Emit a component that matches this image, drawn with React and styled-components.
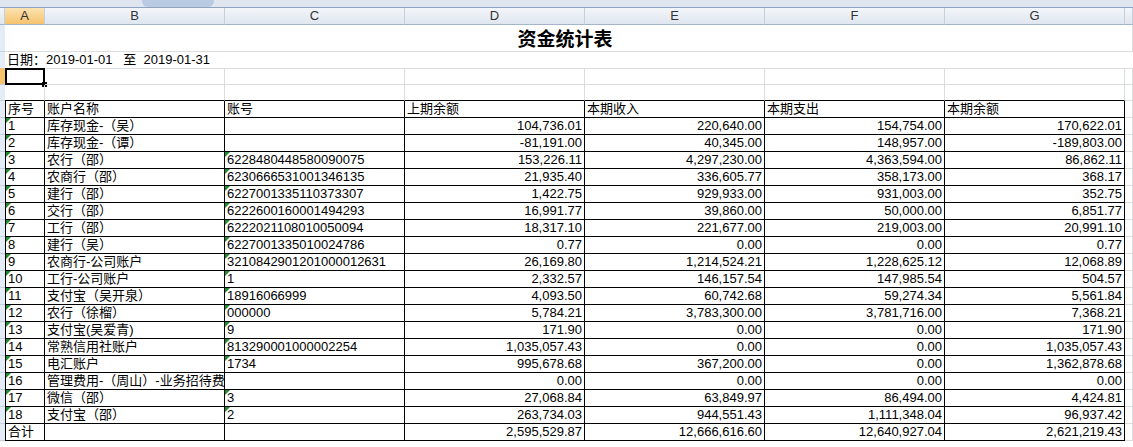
import React from 'react';
import styled, { createGlobalStyle } from 'styled-components';

const Global = createGlobalStyle`
  body { margin: 0; background: #fff; font-family: "Liberation Sans", "Noto Sans CJK SC", sans-serif; font-size: 13px; color: #000; }
`;

const COLS = '5px 40px 180px 180px 180px 180px 180px 180px 1fr';

const Sheet = styled.div`
  width: 1133px;
  height: 447px;
  overflow: hidden;
`;

const TopStrip = styled.div`
  height: 8px;
  background: #dfe6ef;
  border-bottom: 1px solid #8ea3bd;
  display: flex;
  box-sizing: border-box;
`;

const Tab = styled.div`
  margin-left: 142px;
  width: 72px;
  background: #b9cbe2;
  border-radius: 0 0 6px 6px;
`;

const Row = styled.div`
  display: grid;
  grid-template-columns: ${COLS};
  height: ${p => p.$h}px;
`;

const ColHead = styled.div`
  background: ${p => (p.$active ? 'linear-gradient(#fbe3b1,#f6c36c)' : 'linear-gradient(#f3f6fa,#dfe6ef)')};
  border-right: 1px solid #c5d0dd;
  border-bottom: 1px solid #a5b5c9;
  text-align: center;
  font-size: 13px;
  line-height: 16px;
  color: #333;
`;

const Stub = styled.div`
  background: ${p => (p.$active ? '#f6c36c' : '#e4ecf7')};
  border-bottom: 1px solid #c5d0dd;
`;

const Cell = styled.div`
  position: relative;
  box-sizing: border-box;
  border-right: 1px solid ${p => (p.$b ? '#000' : '#dadcdd')};
  border-bottom: 1px solid ${p => (p.$b ? '#000' : '#dadcdd')};
  border-left: ${p => (p.$first ? '1px solid #000' : 'none')};
  text-align: ${p => (p.$num ? 'right' : 'left')};
  padding: 0 2px;
  white-space: nowrap;
  overflow: hidden;
  line-height: 16px;
  font-size: 13px;
`;

const Title = styled.div`
  grid-column: 2 / 9;
  text-align: center;
  font-family: "Noto Sans CJK SC", sans-serif;
  font-weight: 700;
  font-size: 19px;
  line-height: 26px;
  border-bottom: 1px solid #dadcdd;
`;

const Span = styled.div`
  grid-column: 2 / 10;
  line-height: 16px;
  padding-left: 2px;
  border-bottom: 1px solid #dadcdd;
`;

const Selected = styled.div`
  box-sizing: border-box;
  border: 2px solid #000;
  position: relative;
  &::after {
    content: '';
    position: absolute;
    right: -4px;
    bottom: -4px;
    width: 5px;
    height: 5px;
    background: #000;
  }
`;

const Tri = styled.span`
  position: absolute;
  left: 0;
  top: 0;
  border-top: 5px solid #1e8c2e;
  border-right: 5px solid transparent;
`;

const data = [
  ['1', '库存现金-（吴）', '', '104,736.01', '220,640.00', '154,754.00', '170,622.01'],
  ['2', '库存现金-（谭）', '', '-81,191.00', '40,345.00', '148,957.00', '-189,803.00'],
  ['3', '农行（邵）', '6228480448580090075', '153,226.11', '4,297,230.00', '4,363,594.00', '86,862.11'],
  ['4', '农商行（邵）', '6230666531001346135', '21,935.40', '336,605.77', '358,173.00', '368.17'],
  ['5', '建行（邵）', '6227001335110373307', '1,422.75', '929,933.00', '931,003.00', '352.75'],
  ['6', '交行（邵）', '6222600160001494293', '16,991.77', '39,860.00', '50,000.00', '6,851.77'],
  ['7', '工行（邵）', '6222021108010050094', '18,317.10', '221,677.00', '219,003.00', '20,991.10'],
  ['8', '建行（吴）', '6227001335010024786', '0.77', '0.00', '0.00', '0.77'],
  ['9', '农商行-公司账户', '3210842901201000012631', '26,169.80', '1,214,524.21', '1,228,625.12', '12,068.89'],
  ['10', '工行-公司账户', '1', '2,332.57', '146,157.54', '147,985.54', '504.57'],
  ['11', '支付宝（吴开泉）', '18916066999', '4,093.50', '60,742.68', '59,274.34', '5,561.84'],
  ['12', '农行（徐榴）', '000000', '5,784.21', '3,783,300.00', '3,781,716.00', '7,368.21'],
  ['13', '支付宝(吴爱青)', '9', '171.90', '0.00', '0.00', '171.90'],
  ['14', '常熟信用社账户', '813290001000002254', '1,035,057.43', '0.00', '0.00', '1,035,057.43'],
  ['15', '电汇账户', '1734', '995,678.68', '367,200.00', '0.00', '1,362,878.68'],
  ['16', '管理费用-（周山）-业务招待费', '', '0.00', '0.00', '0.00', '0.00'],
  ['17', '微信（邵）', '3', '27,068.84', '63,849.97', '86,494.00', '4,424.81'],
  ['18', '支付宝（邵）', '2', '263,734.03', '944,551.43', '1,111,348.04', '96,937.42'],
];

const heads = ['序号', '账户名称', '账号', '上期余额', '本期收入', '本期支出', '本期余额'];

function Line({ cells, tri, head }) {
  return (
    <Row $h={17}>
      <Stub />
      {cells.map((c, i) => (
        <Cell key={i} $b $first={i === 0} $num={!head && i >= 3}>
          {tri && (i === 0 || (i === 2 && c)) && <Tri />}
          {c}
        </Cell>
      ))}
      <Cell />
    </Row>
  );
}

export default function App() {
  return (
    <Sheet>
      <Global />
      <TopStrip><Tab /></TopStrip>
      <Row $h={17}>
        <ColHead />
        {['A', 'B', 'C', 'D', 'E', 'F', 'G', ''].map((l, i) => (
          <ColHead key={i} $active={i === 0}>{l}</ColHead>
        ))}
      </Row>
      <Row $h={27}><Stub /><Title>资金统计表</Title><Cell /></Row>
      <Row $h={16}><Stub /><Span>日期：2019-01-01&nbsp;&nbsp;&nbsp;至&nbsp;&nbsp;2019-01-31</Span></Row>
      <Row $h={17}>
        <Stub $active />
        <Selected />
        {[0, 1, 2, 3, 4, 5, 6].map(i => <Cell key={i} />)}
      </Row>
      <Row $h={16}>
        <Stub />
        {[0, 1, 2, 3, 4, 5, 6, 7].map(i => <Cell key={i} $b={false} style={i < 7 ? { borderBottomColor: '#000' } : undefined} />)}
      </Row>
      <Line cells={heads} head />
      {data.map(r => <Line key={r[0]} cells={r} tri />)}
      <Line cells={['合计', '', '', '2,595,529.87', '12,666,616.60', '12,640,927.04', '2,621,219.43']} />
    </Sheet>
  );
}
